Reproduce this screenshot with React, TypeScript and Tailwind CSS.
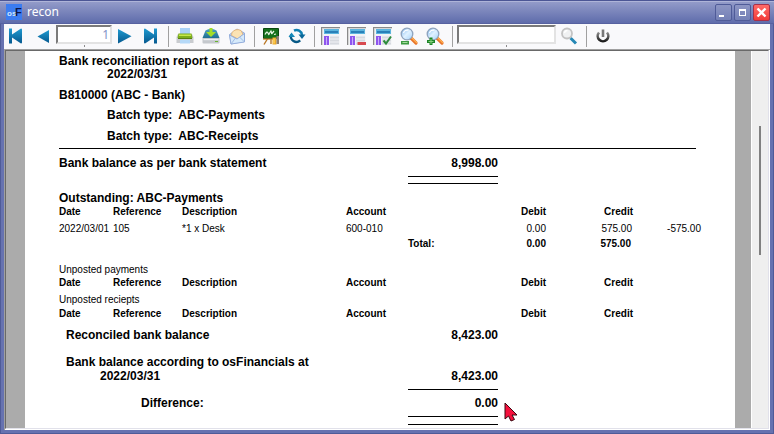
import type { ReactNode } from "react";

function Icon({ children }: { children: ReactNode }) {
  return (
    <svg width="20" height="20" viewBox="0 0 20 20" aria-hidden="true">
      {children}
    </svg>
  );
}

function ToolButton({ label, children }: { label: string; children: ReactNode }) {
  return (
    <button type="button" aria-label={label} className="flex w-[26px] shrink-0 justify-center pt-[2px]">
      <Icon>{children}</Icon>
    </button>
  );
}

function Separator() {
  return (
    <div className="flex w-2 shrink-0 justify-center py-[2px] pl-px">
      <div className="w-px bg-[#a0a0a0]" />
    </div>
  );
}

function Gradients() {
  return (
    <svg width="0" height="0" className="absolute" aria-hidden="true">
      <defs>
        <linearGradient id="nav" x1="0" y1="0" x2="0" y2="1">
          <stop offset="0" stopColor="#1f9ad0" />
          <stop offset="1" stopColor="#06598f" />
        </linearGradient>
        <linearGradient id="drive" x1="0" y1="0" x2="0" y2="1">
          <stop offset="0" stopColor="#4fa3bf" />
          <stop offset="1" stopColor="#1f6f93" />
        </linearGradient>
        <linearGradient id="glass" x1="0" y1="0" x2="1" y2="1">
          <stop offset="0" stopColor="#7fb8f0" />
          <stop offset="0.5" stopColor="#dff1ff" />
          <stop offset="1" stopColor="#a5d2fa" />
        </linearGradient>
        <linearGradient id="power" x1="0" y1="0" x2="0" y2="1">
          <stop offset="0" stopColor="#8c8c8c" />
          <stop offset="1" stopColor="#1c1c1c" />
        </linearGradient>
      </defs>
    </svg>
  );
}

function PanelShape({ children }: { children?: ReactNode }) {
  return (
    <>
      <path d="M0 1h19v1.200H1.200V19H0z" fill="#8a8a8a" />
      <path d="M1.200 2.200h17.800v1H2.200V19h-1z" fill="#d4d4d4" />
      <rect x="2.500" y="3" width="16" height="16" fill="#f1f3f6" />
      <rect x="3" y="3" width="15" height="5" fill="#5cb4de" />
      <rect x="4" y="5" width="13" height="2" fill="#2a80b8" />
      <rect x="3" y="10" width="5" height="9" fill="#8e55ee" />
      <rect x="5" y="11" width="1" height="8" fill="#c8acfb" />
      <path d="M9 11.500h9M9 14.500h9M9 17.500h9" stroke="#d7dae0" strokeWidth="2" />
      {children}
    </>
  );
}

function Magnifier({ children }: { children?: ReactNode }) {
  return (
    <>
      <path d="M12 12l5 5" stroke="#e8742a" strokeWidth="3.200" strokeLinecap="round" />
      <path d="M12.500 11.500l5 5" stroke="#ffb04f" strokeWidth="1.200" strokeLinecap="round" />
      <circle cx="8" cy="8" r="5.800" fill="url(#glass)" stroke="#8fa3bd" strokeWidth="1.300" />
      <path d="M4.500 7a4 4 0 0 1 5-2.800" fill="none" stroke="#fff" strokeWidth="1.200" />
      {children}
    </>
  );
}

function Toolbar() {
  return (
    <div className="flex h-[25px] w-full shrink-0 overflow-hidden bg-[#f9f9fb]">
      <ToolButton label="First page">
        <path d="M2 2.500h3v6L14 2.500q1 0 1 1v13q0 1-1 1L5 11.500v6H2z" fill="url(#nav)" />
      </ToolButton>
      <ToolButton label="Previous page">
        <path d="M16 4v13L4.500 10.500z" fill="url(#nav)" />
      </ToolButton>
      <div className="flex w-14 shrink-0 flex-col pt-px">
        <input
          aria-label="Page number"
          defaultValue="1"
          className="h-[19px] w-full border-2 border-t-[#7a7a7a] border-r-[#e3e3e3] border-b-[#e3e3e3] border-l-[#7a7a7a] bg-white pr-px text-right font-['Noto_Sans','Open_Sans',sans-serif] text-[12px] leading-[15px] text-[#8291c8] outline-none"
        />
        <div className="mx-auto mt-px h-[2px] w-px bg-[#8c8c8c]" />
      </div>
      <ToolButton label="Next page">
        <path d="M3 3v14.500L16.500 10.200z" fill="url(#nav)" />
      </ToolButton>
      <ToolButton label="Last page">
        <path d="M3 3.500q0-1 1-1L13 8.500v-6h3v15h-3v-6L4 17.500q-1 0-1-1z" fill="url(#nav)" />
      </ToolButton>
      <Separator />
      <ToolButton label="Print">
        <path d="M5 2h10v6H5z" fill="#a9d2f7" />
        <path d="M3 8h14l1.500 3v6h-17v-6z" fill="#c9ccd0" />
        <path d="M3.500 7.500h13l1 4.500h-15z" fill="#7cae1c" />
        <path d="M4 8.500h12v1.500H4z" fill="#c6e84b" />
        <path d="M3 12h14v1H3z" fill="#587f12" />
        <path d="M5 14h10v3.500H5z" fill="#b5d9f8" />
      </ToolButton>
      <ToolButton label="Export to file">
        <path d="M4.500 4.500q5.500-3.500 11 0l3 7.500h-17z" fill="url(#drive)" />
        <path d="M1.500 12h17v4.500q0 1-1 1h-15q-1 0-1-1z" fill="#c4c8cd" />
        <path d="M2.500 13h15v1.200h-15z" fill="#eef0f2" />
        <path d="M14 15h3v1h-3z" fill="#6ab42f" />
        <path d="M8.500 2h3v4H15l-5 5-5-5h3.500z" fill="#a4de27" />
      </ToolButton>
      <ToolButton label="Send by e-mail">
        <path d="M2.500 8.500L10 3 17.500 7v8.500L4 18z" fill="#b9cbec" stroke="#8da7d6" strokeWidth="0.800" />
        <path d="M5 6.500Q8.500 2 14 4.500l2 4-5 4.500-6.500-3.500z" fill="#fbe3b4" stroke="#e3ae6c" strokeWidth="0.800" />
        <path d="M2.500 9l7.500 4L17.500 7.500v8.500L4 18z" fill="#d6eafb" stroke="#8ea9da" strokeWidth="0.900" />
        <path d="M4 18l4.500-6M17.500 16l-5-5" stroke="#9bb5e0" strokeWidth="0.900" />
      </ToolButton>
      <Separator />
      <ToolButton label="Report designer">
        <path d="M7 12l-4 6.500M10 12v6" stroke="#b87624" strokeWidth="1.400" />
        <path d="M2.500 2.500h15v10h-15z" fill="#15701b" stroke="#0a4810" strokeWidth="1" />
        <path d="M4 8.500q2-4 3-1.500T8 8l2-3q1 2 .5 3l2.500-3M13 8.500l2-.5" fill="none" stroke="#e6f4e3" strokeWidth="1.200" />
        <path d="M2 12.500h10v1.200h-10z" fill="#c8842c" />
        <path d="M11.500 11.500h4v7h-4z" fill="#efaa24" />
        <path d="M15.500 10h2.500v8h-2.500z" fill="#877c78" />
        <path d="M12.500 12.500h1v5h-1z" fill="#ffe17c" />
      </ToolButton>
      <ToolButton label="Refresh">
        <path d="M7 4.600a5.500 5.500 0 0 1 8 4.400" fill="none" stroke="#0f7fb2" strokeWidth="2.400" />
        <path d="M4.200 8.500a5.500 5.500 0 0 0 9 5.800" fill="none" stroke="#075986" strokeWidth="2.400" />
        <path d="M11.500 8.500h7L15 13z" fill="#0b6798" />
        <path d="M1.500 11h6.500L4.500 6.500z" fill="#1588b8" />
      </ToolButton>
      <Separator />
      <ToolButton label="Group tree">
        <PanelShape />
      </ToolButton>
      <ToolButton label="Hide parameters">
        <PanelShape>
          <rect x="10.500" y="16" width="8.500" height="3" fill="#d84a50" />
        </PanelShape>
      </ToolButton>
      <ToolButton label="Apply parameters">
        <PanelShape>
          <path d="M10.500 14.500l2.500 3 5-7" fill="none" stroke="#2e8b3c" strokeWidth="2" />
        </PanelShape>
      </ToolButton>
      <ToolButton label="Zoom out">
        <Magnifier>
          <rect x="2" y="15" width="8" height="3.500" fill="#3d9a42" />
          <path d="M3.500 16.500h5" stroke="#a5dc9d" />
        </Magnifier>
      </ToolButton>
      <ToolButton label="Zoom in">
        <Magnifier>
          <path d="M4.500 11.500h3V14H10v3H7.500v2h-3v-2H2v-3h2.500z" fill="#1d8527" />
          <path d="M6 13v5M3.500 15.500h5" stroke="#8ad181" />
        </Magnifier>
      </ToolButton>
      <Separator />
      <div className="ml-px flex w-[99px] shrink-0 flex-col pt-px">
        <input
          aria-label="Search text"
          className="h-[19px] w-full border-2 border-t-[#7a7a7a] border-r-[#e3e3e3] border-b-[#e3e3e3] border-l-[#7a7a7a] bg-white px-1 text-[12px] outline-none"
        />
        <div className="mx-auto mt-px h-[2px] w-px bg-[#8c8c8c]" />
      </div>
      <ToolButton label="Search">
        <path d="M11.500 12l5.500 5.500" stroke="#2587b5" strokeWidth="3" />
        <circle cx="8" cy="7.500" r="5" fill="#f0f1f2" stroke="#c3c3c3" strokeWidth="1.800" />
        <path d="M5.500 7a3 3 0 0 1 3-2.500" fill="none" stroke="#fff" strokeWidth="1.400" />
      </ToolButton>
      <Separator />
      <ToolButton label="Close report">
        <path d="M6 6.500a5.300 5.300 0 1 0 8 0" fill="none" stroke="url(#power)" strokeWidth="2.600" />
        <path d="M8.700 3.500h2.600v7.500H8.700z" fill="#777" />
      </ToolButton>
    </div>
  );
}

function TitleBar() {
  const control =
    "flex size-[17px] items-center justify-center rounded-[2px] border border-[#4f5b98] bg-linear-to-b from-[#8d96c4] to-[#7480b6]";
  return (
    <header className="flex h-6 shrink-0 items-center border-t border-b border-t-[#4c5695] border-b-[#5661a0] bg-linear-to-b from-[#959dca] to-[#5f6cab] pr-1 pl-[6px] shadow-[inset_0_1px_0_#aeb4d8]">
      <svg width="16" height="16" viewBox="0 0 16 16" aria-hidden="true">
        <rect width="16" height="16" fill="#3b7cf0" />
        <text x="1" y="12" fontFamily="Liberation Sans" fontWeight="700" fontSize="8" fill="#cfe6ff">os</text>
        <text x="9" y="12" fontFamily="Liberation Sans" fontWeight="700" fontSize="11" fill="#0d1747">F</text>
      </svg>
      <h1 className="ml-[5px] flex-1 font-['Noto_Sans','Open_Sans',sans-serif] text-[12px] leading-4 text-white">recon</h1>
      <div className="flex gap-[2px]">
        <button type="button" aria-label="Minimize" className={control}>
          <svg width="15" height="15" viewBox="0 0 15 15"><path d="M3 10h5v2H3z" fill="#fff" /></svg>
        </button>
        <button type="button" aria-label="Maximize" className={control}>
          <svg width="15" height="15" viewBox="0 0 15 15"><path d="M4 4h7v7H4zM5 6v4h5V6z" fill="#fff" fillRule="evenodd" /></svg>
        </button>
        <button
          type="button"
          aria-label="Close"
          className="flex size-[17px] items-center justify-center rounded-[2px] border border-[#a8304a] bg-linear-to-b from-[#ff6a68] to-[#f23a38]"
        >
          <svg width="15" height="15" viewBox="0 0 15 15"><path d="M3.500 3.500l8 8M11.500 3.500l-8 8" stroke="#fff" strokeWidth="2.400" /></svg>
        </button>
      </div>
    </header>
  );
}

type Entry = { date: string; reference: string; description: string; account: string; debit: string; credit: string; net: string };

function EntryTable({ entries = [], total }: { entries?: Entry[]; total?: { debit: string; credit: string } }) {
  return (
    <table className="w-[642px] table-fixed border-collapse text-[10px] leading-[13px] whitespace-nowrap">
      <colgroup>
        <col className="w-[54px]" />
        <col className="w-[69px]" />
        <col className="w-[164px]" />
        <col className="w-[62px]" />
        <col className="w-[138px]" />
        <col className="w-[87px]" />
        <col className="w-[68px]" />
      </colgroup>
      <thead>
        <tr className="text-left">
          <th>Date</th>
          <th>Reference</th>
          <th>Description</th>
          <th>Account</th>
          <th className="text-right">Debit</th>
          <th className="text-right">Credit</th>
          <td />
        </tr>
      </thead>
      <tbody>
        {entries.map((e) => (
          <tr key={e.reference}>
            <td className="pt-1">{e.date}</td>
            <td className="pt-1">{e.reference}</td>
            <td className="pt-1">{e.description}</td>
            <td className="pt-1">{e.account}</td>
            <td className="pt-1 text-right">{e.debit}</td>
            <td className="pt-1 pr-px text-right">{e.credit}</td>
            <td className="pt-1 text-right">{e.net}</td>
          </tr>
        ))}
        {total && (
          <tr className="font-bold">
            <td colSpan={3} />
            <td />
            <td className="pt-[2px]">
              <div className="flex justify-between">
                <span>Total:</span>
                <span>{total.debit}</span>
              </div>
            </td>
            <td className="pt-[2px] pr-[2px] text-right">{total.credit}</td>
            <td />
          </tr>
        )}
      </tbody>
    </table>
  );
}

function AmountLine({ label, amount, className }: { label: string; amount: string; className: string }) {
  return (
    <div className={`flex w-[439px] justify-between ${className}`}>
      <span>{label}</span>
      <span>{amount}</span>
    </div>
  );
}

function AmountRule({ className }: { className: string }) {
  return <div className={`ml-[349px] h-px w-[90px] bg-black ${className}`} />;
}

const payments: Entry[] = [
  { date: "2022/03/01", reference: "105", description: "*1 x Desk", account: "600-010", debit: "0.00", credit: "575.00", net: "-575.00" },
];

function Report() {
  return (
    <article className="min-w-0 flex-1 overflow-hidden bg-white pt-1 pl-[34px] text-[12px] leading-[13px] font-bold whitespace-nowrap text-black">
      <h2>Bank reconciliation report as at</h2>
      <p className="ml-12">2022/03/31</p>
      <p className="mt-2">B810000 (ABC - Bank)</p>
      <p className="mt-[7px] ml-12 flex gap-[6px]"><span>Batch type:</span><span>ABC-Payments</span></p>
      <p className="mt-2 ml-12 flex gap-[6px]"><span>Batch type:</span><span>ABC-Receipts</span></p>
      <div className="mt-[5px] mr-[39px] h-px bg-black" />
      <AmountLine className="mt-2" label="Bank balance as per bank statement" amount="8,998.00" />
      <AmountRule className="mt-[6px]" />
      <AmountRule className="mt-[6px]" />
      <h3 className="mt-2">Outstanding: ABC-Payments</h3>
      <div className="font-normal">
        <EntryTable entries={payments} total={{ debit: "0.00", credit: "575.00" }} />
        <p className="mt-[13px] text-[10px]">Unposted payments</p>
        <EntryTable />
        <p className="mt-1 text-[10px]">Unposted reciepts</p>
        <div className="mt-px">
          <EntryTable />
        </div>
      </div>
      <AmountLine className="mt-[9px] pl-[7px]" label="Reconciled bank balance" amount="8,423.00" />
      <p className="mt-[14px] pl-[7px]">Bank balance according to osFinancials at</p>
      <AmountLine className="mt-px pl-[41px]" label="2022/03/31" amount="8,423.00" />
      <AmountRule className="mt-[6px]" />
      <AmountLine className="mt-[7px] pl-[82px]" label="Difference:" amount="0.00" />
      <AmountRule className="mt-[6px]" />
      <AmountRule className="mt-[7px]" />
    </article>
  );
}

export default function App() {
  return (
    <div className="relative flex min-h-screen flex-col bg-[#6672b0] font-['Liberation_Sans',Arial,sans-serif]">
      <Gradients />
      <TitleBar />
      <div className="flex flex-1 flex-col border-x border-b border-[#4f5b98] px-[3px] pb-[3px]">
        <Toolbar />
        <main className="flex flex-1 border-t border-l border-t-[#a0a0a0] border-l-[#a0a0a0] bg-white pr-px pb-px">
          <div className="flex min-w-0 flex-1 border border-t-[#696969] border-r-[#e1e1ea] border-b-[#e1e1ea] border-l-[#696969]">
            <div className="w-[19px] shrink-0 bg-[#ababab]" />
            <Report />
            <div className="w-4 shrink-0 bg-[#ababab]" />
            <div className="ml-px w-4 shrink-0 bg-[#efefef] pt-[75px]">
              <div className="mx-auto h-[129px] w-[2px] bg-[#808080]" />
            </div>
          </div>
        </main>
      </div>
      <svg className="absolute top-[402px] left-[504px]" width="15" height="22" viewBox="0 0 15 22" aria-hidden="true">
        <path d="M1 1v16l3.500-3 2.500 5 3.500-1.500-2.500-4.500h5z" fill="#f5103c" stroke="#3a0710" strokeWidth="1" />
      </svg>
    </div>
  );
}
